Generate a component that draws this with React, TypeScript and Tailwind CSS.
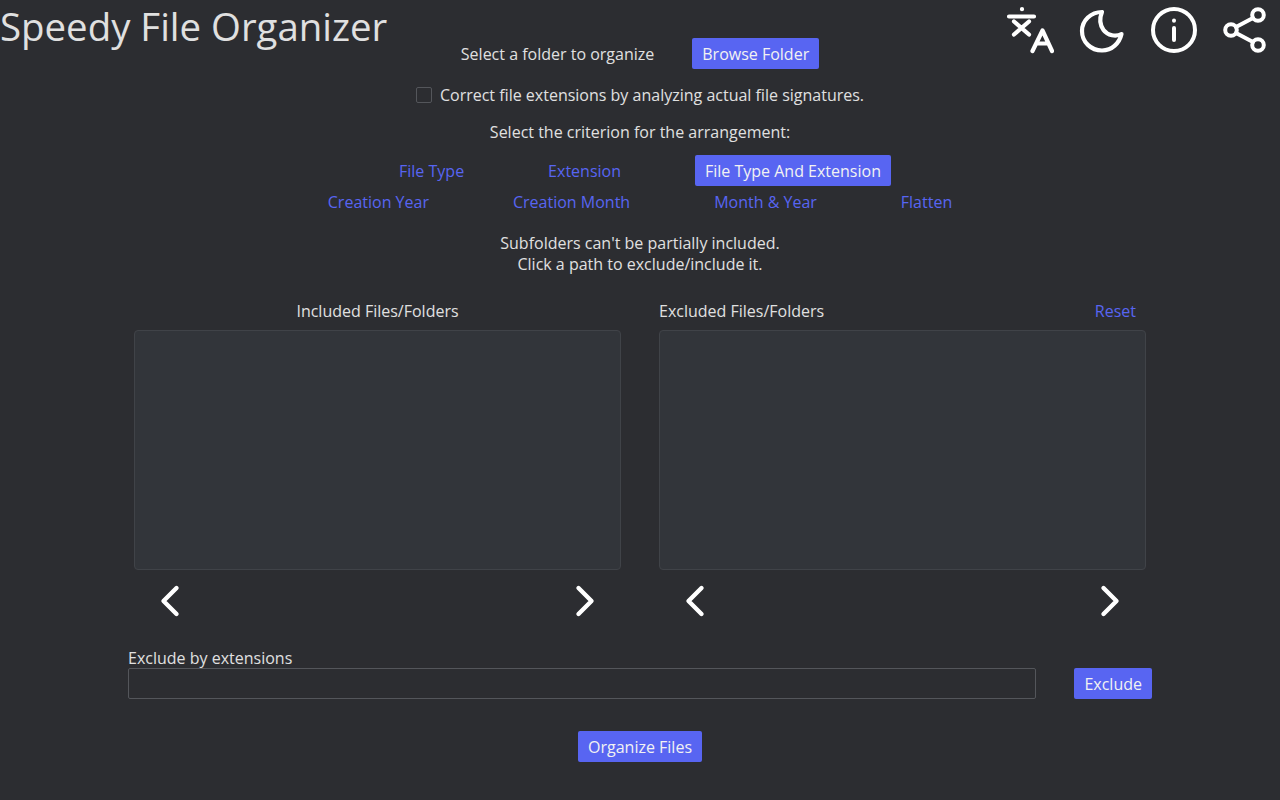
import React from "react";

const Btn = ({ children, active }: { children: React.ReactNode; active?: boolean }) => (
  <button className={active ? "h-[31px] px-2.5 pt-px rounded-[2px] bg-[#5865f2] text-[#f2f2f2] leading-[30px] whitespace-nowrap" : "h-[31px] px-2.5 pt-px rounded-[2px] text-[#5865f2] leading-[30px] whitespace-nowrap"}>
    {children}
  </button>
);

const Chevron = ({ dir }: { dir: "l" | "r" }) => (
  <svg width="36" height="36" viewBox="0 0 36 36" fill="none" stroke="#fff" strokeWidth="4.4" strokeLinecap="round" strokeLinejoin="round">
    <path d={dir === "l" ? "M24.5 5 L11.5 18 L24.5 31" : "M11.5 5 L24.5 18 L11.5 31"} />
  </svg>
);

const Panel = ({ title, reset }: { title: string; reset?: boolean }) => (
  <div className="w-[487px] flex flex-col">
    <div className={reset ? "h-[31px] mb-[3px] flex items-center justify-between" : "h-[31px] mb-[3px] flex items-center justify-center"}>
      <span className="leading-[21px]">{title}</span>
      {reset && <button className="px-2.5 text-[#5865f2] leading-[21px]">Reset</button>}
    </div>
    <div className="h-[240px] rounded border border-[#404348] bg-[#32353a]" />
    <div className="h-[62px] px-[18px] flex items-center justify-between">
      <Chevron dir="l" />
      <Chevron dir="r" />
    </div>
  </div>
);

export default function App() {
  return (
    <div className="h-[800px] bg-[#2c2d31] text-[#e0e0e0] text-base overflow-hidden font-['Open_Sans',sans-serif]">
      <header className="h-[38px] flex items-start justify-between">
        <h1 className="text-[38.4px] leading-[52px] whitespace-nowrap">Speedy File Organizer</h1>
        <div className="flex gap-6 pt-[6px] pr-[10px]">
          <svg width="48" height="48" viewBox="0 0 48 48" fill="none" stroke="#fff" strokeWidth="4.2" strokeLinecap="round" strokeLinejoin="round">
            <path d="M3 10.5 H28 M16 3 V3.2 M8 15.5 L23 28.5 M23 15.5 L8 28.5 M26.5 45 L36.5 24.5 L46 45 M30.5 37.5 H42.5" />
          </svg>
          <svg width="48" height="48" viewBox="0 0 48 48" fill="none" stroke="#fff" strokeWidth="4.2" strokeLinecap="round" strokeLinejoin="round">
            <path d="M24 6 C13 6 4 14.5 4 25 C4 36 13 44.5 24 44.5 C34 44.5 41.5 37 43.5 28 C38 31 29.5 29.5 25.5 24 C22 19 21.5 12 24 6 Z" />
          </svg>
          <svg width="48" height="48" viewBox="0 0 48 48" fill="none" stroke="#fff" strokeWidth="4" strokeLinecap="round" strokeLinejoin="round">
            <circle cx="24" cy="24" r="21" />
            <path d="M24 22 V34 M24 14.5 V14.7" />
          </svg>
          <svg width="48" height="48" viewBox="0 0 48 48" fill="none" stroke="#fff" strokeWidth="4" strokeLinecap="round" strokeLinejoin="round">
            <circle cx="36" cy="9" r="5.8" />
            <circle cx="36" cy="39" r="5.8" />
            <circle cx="9" cy="24" r="5.8" />
            <path d="M14 21 L31 12 M14 27 L31 36" />
          </svg>
        </div>
      </header>

      <div className="flex justify-center items-center gap-[38px] h-[31px]">
        <span>Select a folder to organize</span>
        <Btn active>Browse Folder</Btn>
      </div>

      <div className="mt-[15px] flex justify-center items-center gap-2 h-[21px]">
        <span className="w-4 h-4 rounded-[2px] border border-[#54565b]" />
        <span>Correct file extensions by analyzing actual file signatures.</span>
      </div>

      <p className="mt-[17px] text-center leading-[21px]">Select the criterion for the arrangement:</p>

      <div className="mt-3 flex justify-center gap-16">
        <Btn>File Type</Btn>
        <Btn>Extension</Btn>
        <Btn active>File Type And Extension</Btn>
      </div>
      <div className="flex justify-center gap-16">
        <Btn>Creation Year</Btn>
        <Btn>Creation Month</Btn>
        <Btn>Month &amp; Year</Btn>
        <Btn>Flatten</Btn>
      </div>

      <p className="mt-4 text-center leading-[21px]">
        Subfolders can't be partially included.
        <br />
        Click a path to exclude/include it.
      </p>

      <div className="mt-[21px] flex justify-center gap-[38px]">
        <Panel title="Included Files/Folders" />
        <Panel title="Excluded Files/Folders" reset />
      </div>

      <div className="w-[1024px] mx-auto mt-[16px]">
        <div className="leading-[21px] h-[20px]">Exclude by extensions</div>
        <div className="flex justify-between">
          <input className="w-[908px] h-[31px] rounded-[2px] border border-[#54565b] bg-transparent outline-none" />
          <Btn active>Exclude</Btn>
        </div>
      </div>

      <div className="mt-8 flex justify-center">
        <Btn active>Organize Files</Btn>
      </div>
    </div>
  );
}
